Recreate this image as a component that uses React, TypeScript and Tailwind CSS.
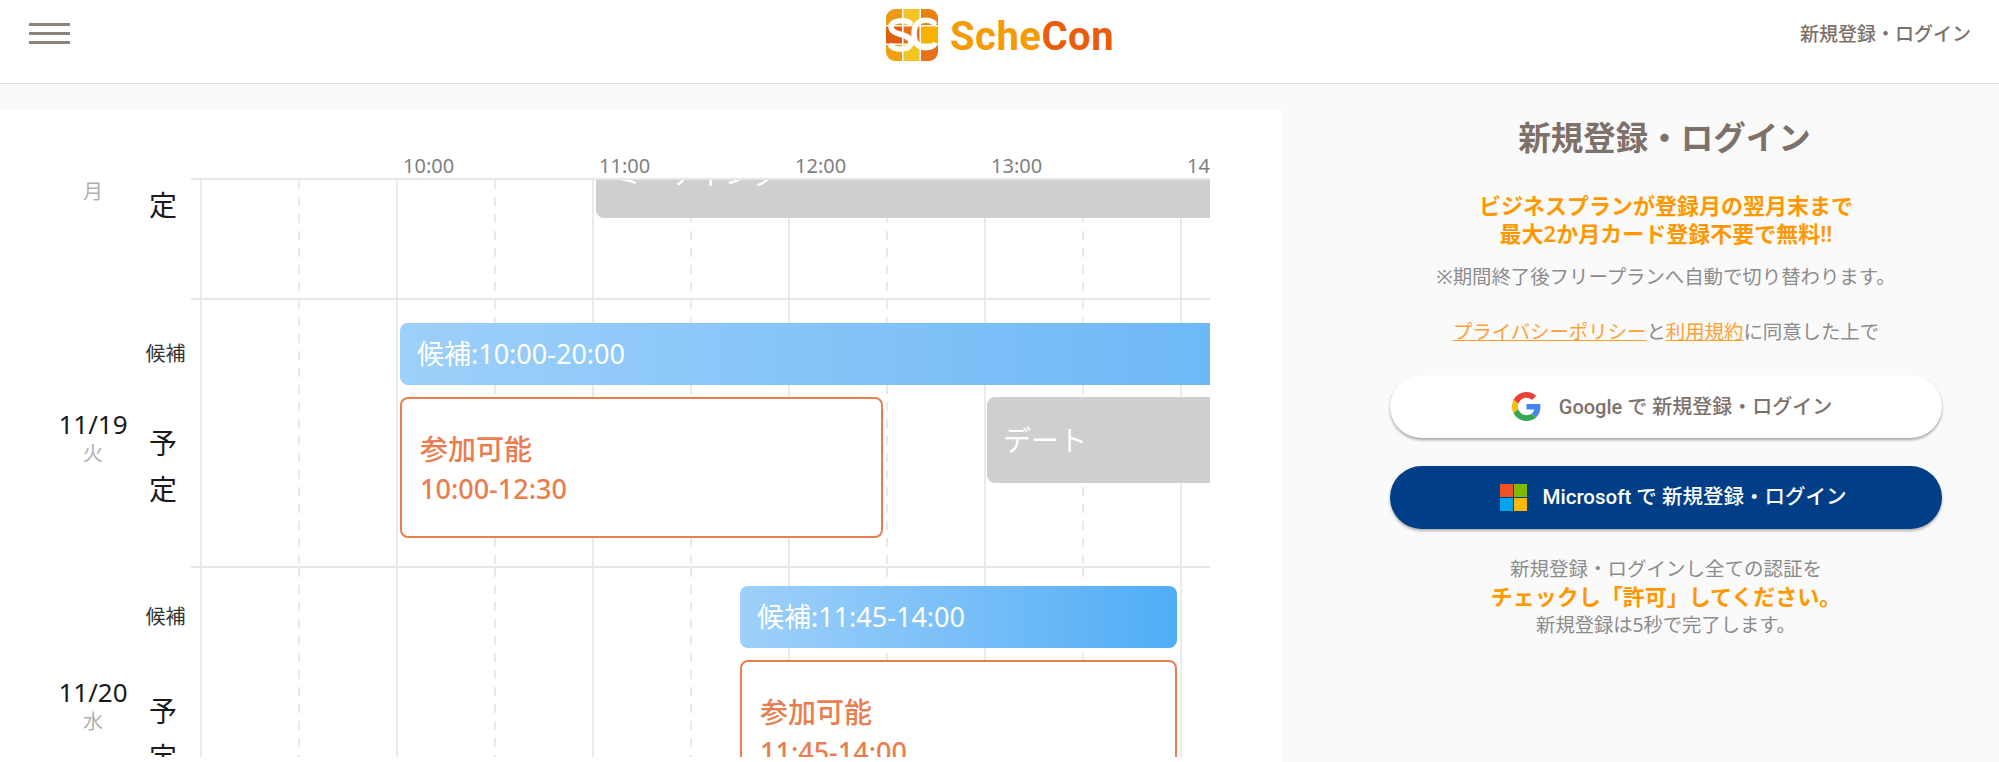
const lines = [
  { x: 9, dashed: false },
  { x: 107, dashed: true },
  { x: 205, dashed: false },
  { x: 303, dashed: true },
  { x: 401, dashed: false },
  { x: 499, dashed: true },
  { x: 597, dashed: false },
  { x: 695, dashed: true },
  { x: 793, dashed: false },
  { x: 891, dashed: true },
  { x: 989, dashed: false },
];

function GridLines() {
  return (
    <div className="absolute inset-0">
      {lines.map((line) => (
        <div
          key={line.x}
          style={{ left: line.x }}
          className={
            line.dashed
              ? "absolute top-0 bottom-0 w-[2px] bg-[repeating-linear-gradient(to_bottom,#e9e9e9_0,#e9e9e9_9px,transparent_9px,transparent_17px)]"
              : "absolute top-0 bottom-0 w-[2px] bg-[#ebebeb]"
          }
        />
      ))}
    </div>
  );
}

function Candidate({ label, className }: { label: string; className: string }) {
  return (
    <div
      className={`relative h-[62px] rounded-lg flex items-center pl-[17px] text-white text-[27px] ${className}`}
    >
      {label}
    </div>
  );
}

function Available({ time, className }: { time: string; className: string }) {
  return (
    <div
      className={`relative shrink-0 h-[141px] rounded-lg border-2 border-[#ea7d4f] bg-white pl-[18px] pt-[31px] text-[#ea7d4f] text-[27px] font-medium leading-[39px] ${className}`}
    >
      <div className="text-[28px]">参加可能</div>
      <div>{time}</div>
    </div>
  );
}

function DayRow({
  date,
  week,
  labelTop,
  planGap,
  children,
}: {
  date: string;
  week: string;
  labelTop: string;
  planGap: string;
  children: React.ReactNode;
}) {
  return (
    <div className="flex h-[268px] shrink-0">
      <div className="w-[140px] shrink-0 pl-[46px] pt-[111px] text-center">
        <div className="text-[26px] leading-[30px] text-[#1a1a1a]">{date}</div>
        <div className="text-[20px] leading-[30px] text-[#b0b0b0]">{week}</div>
      </div>
      <div className={`w-[51px] shrink-0 text-center ${labelTop}`}>
        <div className="text-[20px] leading-[28px] text-[#333333]">候補</div>
        <div className={`pr-[5px] text-[28px] leading-[46px] text-[#1a1a1a] ${planGap}`}>予</div>
        <div className="pr-[5px] text-[28px] leading-[46px] text-[#1a1a1a]">定</div>
      </div>
      <div className="relative flex-1 border-t-2 border-[#e6e6e6]">
        <GridLines />
        {children}
      </div>
    </div>
  );
}

function Logo() {
  return (
    <div className="flex items-center gap-[11px]">
      <svg width="54" height="54" viewBox="0 0 54 54">
        <path d="M10 1h7v16H1V10a9 9 0 0 1 9-9z" fill="#ec9a14" />
        <rect x="18.5" y="1" width="16" height="16" fill="#f2c522" />
        <path d="M36 1h8a9 9 0 0 1 9 9v7H36z" fill="#e8810f" />
        <rect x="1" y="18.5" width="16" height="17" fill="#e25c10" />
        <rect x="18.5" y="18.5" width="16" height="17" fill="#e8701a" />
        <rect x="36" y="18.5" width="17" height="17" fill="#f7b100" />
        <path d="M1 37h16v16h-7a9 9 0 0 1-9-9z" fill="#f0a010" />
        <rect x="18.5" y="37" width="16" height="16" fill="#f2c522" />
        <path d="M36 37h17v7a9 9 0 0 1-9 9h-8z" fill="#e8701a" />
        <g fill="none" stroke="#ffffff" strokeWidth="5.5" strokeLinecap="round">
          <path d="M25 15c-3-3-19-4-19 4 0 9 20 6 20 15 0 9-16 8-20 4" />
          <path d="M49 15c-4-4-20-6-20 11 0 17 16 15 20 11" />
        </g>
      </svg>
      <div className="mt-[5px] font-['Roboto',sans-serif] font-bold text-[40px] leading-none tracking-[0.5px]">
        <span className="text-[#f59a00]">Sche</span>
        <span className="text-[#e85c0a]">Con</span>
      </div>
    </div>
  );
}

function GoogleIcon() {
  return (
    <svg width="29" height="29" viewBox="0 0 48 48">
      <path fill="#EA4335" d="M24 9.5c3.54 0 6.71 1.22 9.21 3.6l6.85-6.85C35.9 2.38 30.47 0 24 0 14.62 0 6.51 5.38 2.56 13.22l7.98 6.19C12.43 13.72 17.74 9.5 24 9.5z" />
      <path fill="#4285F4" d="M46.98 24.55c0-1.57-.15-3.09-.38-4.55H24v9.02h12.94c-.58 2.96-2.26 5.48-4.78 7.18l7.73 6c4.51-4.18 7.09-10.36 7.09-17.65z" />
      <path fill="#FBBC05" d="M10.53 28.59c-.48-1.45-.76-2.99-.76-4.59s.27-3.14.76-4.59l-7.98-6.19C.92 16.46 0 20.12 0 24c0 3.88.92 7.54 2.56 10.78l7.97-6.19z" />
      <path fill="#34A853" d="M24 48c6.48 0 11.93-2.13 15.89-5.81l-7.73-6c-2.15 1.45-4.92 2.3-8.16 2.3-6.26 0-11.57-4.22-13.47-9.91l-7.98 6.19C6.51 42.62 14.62 48 24 48z" />
    </svg>
  );
}

function MicrosoftIcon() {
  return (
    <svg width="27" height="27" viewBox="0 0 27 27">
      <rect x="0" y="0" width="13" height="13" fill="#f25022" />
      <rect x="14" y="0" width="13" height="13" fill="#7fba00" />
      <rect x="0" y="14" width="13" height="13" fill="#00a4ef" />
      <rect x="14" y="14" width="13" height="13" fill="#ffb900" />
    </svg>
  );
}

export default function App() {
  const times = ["10:00", "11:00", "12:00", "13:00", "14:00"];

  return (
    <div className="h-[762px] overflow-hidden bg-[#fafafa] font-['Noto_Sans','Noto_Sans_CJK_JP',sans-serif]">
      <header className="flex h-[84px] items-center justify-between border-b border-[#dddddd] bg-white">
        <div className="w-[300px] pl-[29px] pb-[16px]">
          <div className="flex w-[41px] flex-col gap-[6px]">
            <div className="h-[3px] bg-[#8f8279]" />
            <div className="h-[3px] bg-[#8f8279]" />
            <div className="h-[3px] bg-[#8f8279]" />
          </div>
        </div>
        <div className="pb-[14px]">
          <Logo />
        </div>
        <div className="w-[300px] pr-[28px] pb-[14px] text-right text-[19px] font-medium text-[#7d7169]">
          新規登録・ログイン
        </div>
      </header>

      <div className="flex">
        <div className="mt-[26px] h-[652px] w-[1283px] shrink-0 bg-white">
          <div className="h-[647px] w-[1210px] overflow-hidden">
            <div className="flex h-[68px] items-end overflow-hidden pl-[403px] text-[20px] leading-[24px] text-[#808080]">
              {times.map((time) => (
                <div key={time} className="w-[196px] shrink-0">
                  {time}
                </div>
              ))}
            </div>

            <div className="flex h-[120px]">
              <div className="w-[140px] shrink-0 pl-[46px] text-center text-[20px] leading-[28px] text-[#b0b0b0]">
                月
              </div>
              <div className="w-[51px] shrink-0 pr-[5px] pt-[4px] text-center text-[28px] leading-[46px] text-[#1a1a1a]">
                定
              </div>
              <div className="relative flex-1 overflow-hidden border-t-2 border-[#e6e6e6]">
                <GridLines />
                <div className="relative ml-[405px] mt-[-43px] flex h-[81px] items-center rounded-l-lg bg-[#cfcfcf] pl-[18px] pb-[10px] text-[28px] text-white">
                  ミーティング
                </div>
              </div>
            </div>

            <DayRow date="11/19" week="火" labelTop="pt-[42px]" planGap="mt-[52px]">
              <div className="pt-[23px]">
                <Candidate
                  label="候補:10:00-20:00"
                  className="ml-[209px] rounded-r-none bg-gradient-to-r from-[#9dd0fa] to-[#6db8f6]"
                />
                <div className="mt-[12px] flex">
                  <Available time="10:00-12:30" className="ml-[209px] w-[483px]" />
                  <div className="relative ml-[104px] flex h-[86px] flex-1 items-center rounded-l-lg bg-[#cfcfcf] pl-[16px] text-[28px] text-white">
                    デート
                  </div>
                </div>
              </div>
            </DayRow>

            <DayRow date="11/20" week="水" labelTop="pt-[37px]" planGap="mt-[57px]">
              <div className="pt-[18px]">
                <Candidate
                  label="候補:11:45-14:00"
                  className="ml-[549px] w-[437px] bg-gradient-to-r from-[#9ed0f9] to-[#4fadf6]"
                />
                <div className="mt-[12px] flex">
                  <Available time="11:45-14:00" className="ml-[549px] w-[437px]" />
                </div>
              </div>
            </DayRow>
          </div>
        </div>

        <aside className="flex flex-1 flex-col items-center pt-[34px] pl-[107px] pr-[57px] text-center text-[#8c8c8c]">
          <h1 className="pr-[3px] text-[32.5px] font-semibold leading-[40px] text-[#7d7169]">
            新規登録・ログイン
          </h1>
          <p className="mt-[33px] text-[22px] font-semibold leading-[28px] text-[#ff9800]">
            ビジネスプランが登録月の翌月末まで
            <br />
            最大2か月カード登録不要で無料!!
          </p>
          <p className="mt-[16px] whitespace-nowrap text-[19.4px] leading-[28px]">
            ※期間終了後フリープランへ自動で切り替わります。
          </p>
          <p className="mt-[27px] whitespace-nowrap text-[19.4px] leading-[28px]">
            <a className="text-[#ff9f33] underline">プライバシーポリシー</a>と
            <a className="text-[#ff9f33] underline">利用規約</a>に同意した上で
          </p>
          <button className="mt-[29px] flex h-[63px] w-full shrink-0 items-center justify-center gap-[18px] rounded-full bg-white pl-[12px] font-['Roboto','Noto_Sans_CJK_JP',sans-serif] text-[20px] font-medium text-[#7d7169] shadow-[0_2px_3px_rgba(0,0,0,0.35)]">
            <GoogleIcon />
            Google で 新規登録・ログイン
          </button>
          <button className="mt-[28px] flex h-[63px] w-full shrink-0 items-center justify-center gap-[16px] rounded-full bg-[#003f88] pl-[14px] font-['Roboto','Noto_Sans_CJK_JP',sans-serif] text-[20.5px] font-medium text-white shadow-[0_2px_3px_rgba(0,0,0,0.3)]">
            <MicrosoftIcon />
            Microsoft で 新規登録・ログイン
          </button>
          <p className="mt-[27px] text-[19.5px] leading-[26px]">新規登録・ログインし全ての認証を</p>
          <p className="text-[22px] font-semibold leading-[29px] text-[#ff9800]">
            チェックし「許可」してください。
          </p>
          <p className="text-[19.3px] leading-[27px]">新規登録は5秒で完了します。</p>
        </aside>
      </div>
    </div>
  );
}
